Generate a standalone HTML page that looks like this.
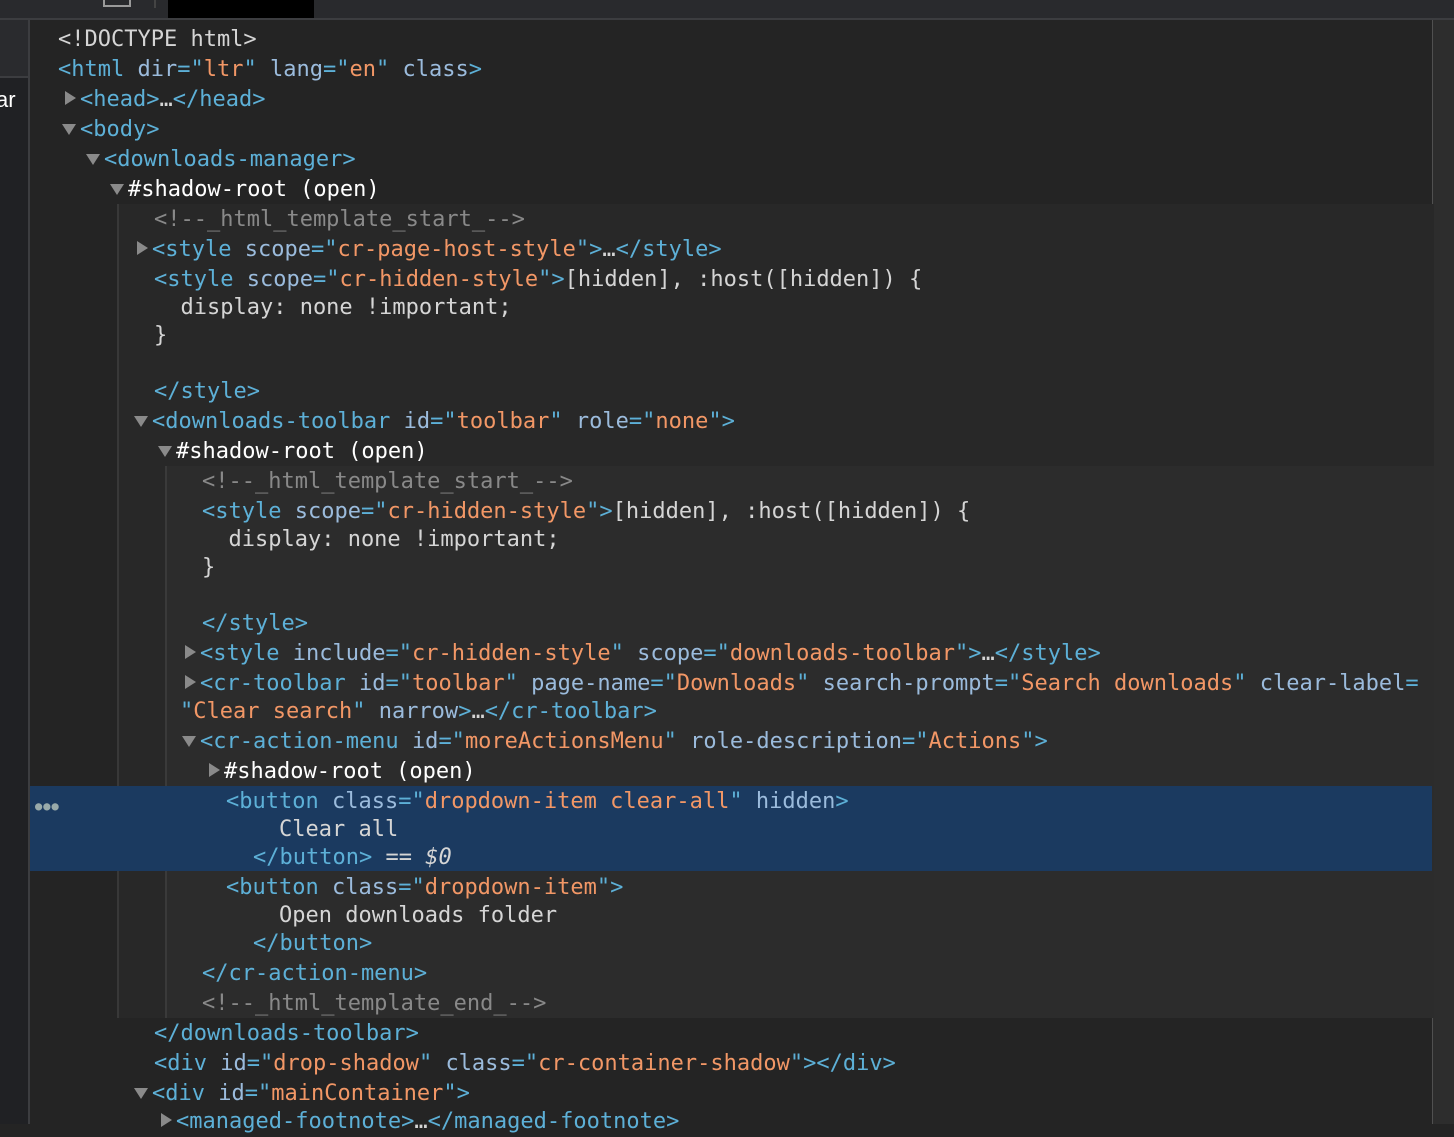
<!DOCTYPE html>
<html><head><style>
body{margin:0;width:1454px;height:1124px;overflow:hidden;background:#242424;position:relative;font-family:"DejaVu Sans Mono","Liberation Mono",monospace;font-size:22px;}
.a{position:absolute;}
.l{position:absolute;height:30px;line-height:30px;white-space:pre;color:#d5d5d5;margin-top:2px;}
.t{color:#5db0d7}.n{color:#9bbbdc}.v{color:#f29766}.c{color:#898989}.w{color:#fff}
.ar{position:absolute;width:0;height:0;}
.r{border-top:7px solid transparent;border-bottom:7px solid transparent;border-left:11px solid #8a8a8a;margin-top:-1px;}
.d{border-left:7px solid transparent;border-right:7px solid transparent;border-top:11px solid #8a8a8a;margin-left:-1px;}
</style></head><body>
<div class="a" style="left:0;top:0;width:1454px;height:18px;background:#292a2d"></div>
<div class="a" style="left:0;top:18px;width:1454px;height:2px;background:#3c3d40"></div>
<div class="a" style="left:168px;top:0;width:146px;height:18px;background:#000"></div>
<div class="a" style="left:103px;top:0;width:28px;height:7px;border:2px solid #9a9a9a;border-top:none;box-sizing:border-box"></div>
<div class="a" style="left:154px;top:0;width:2px;height:8px;background:#444"></div>
<div class="a" style="left:0;top:20px;width:28px;height:1104px;background:#202124"></div>
<div class="a" style="left:0;top:20px;width:28px;height:56px;background:#2a2b2e"></div>
<div class="a" style="left:0;top:76px;width:28px;height:2px;background:#3c3d40"></div>
<div class="a" style="left:28px;top:20px;width:2px;height:1104px;background:#3c3d40"></div>
<div class="l" style="left:-4px;top:83px;color:#fff;font-family:'Liberation Sans',sans-serif">ar</div>
<div class="a" style="left:1432px;top:20px;width:22px;height:1104px;background:#2d2d2d;border-left:1px solid #505050"></div>
<div class="a" style="left:117px;top:204px;width:1315px;height:814px;background:#282828;border-left:2px solid #383838"></div>
<div class="a" style="left:165px;top:466px;width:1267px;height:552px;background:#2c2c2c;border-left:2px solid #3a3a3a"></div>
<div class="a" style="left:30px;top:786px;width:1402px;height:85px;background:#1b3a60"></div>
<div class="a" style="left:35px;top:799px;color:#9aa;font-size:12px;letter-spacing:1px">●●●</div>

<div class="l" style="left:58px;top:23px">&lt;!DOCTYPE html&gt;</div>
<div class="l" style="left:58px;top:53px"><span class="t">&lt;html</span> <span class="n">dir</span><span class="t">="</span><span class="v">ltr</span><span class="t">"</span> <span class="n">lang</span><span class="t">="</span><span class="v">en</span><span class="t">"</span> <span class="n">class</span><span class="t">&gt;</span></div>
<div class="ar r" style="left:65px;top:92px"></div>
<div class="l" style="left:80px;top:83px"><span class="t">&lt;head&gt;</span>…<span class="t">&lt;/head&gt;</span></div>
<div class="ar d" style="left:63px;top:124px"></div>
<div class="l" style="left:80px;top:113px"><span class="t">&lt;body&gt;</span></div>
<div class="ar d" style="left:87px;top:154px"></div>
<div class="l" style="left:104px;top:143px"><span class="t">&lt;downloads-manager&gt;</span></div>
<div class="ar d" style="left:111px;top:184px"></div>
<div class="l w" style="left:128px;top:173px">#shadow-root (open)</div>
<div class="l c" style="left:154px;top:203px">&lt;!--_html_template_start_--&gt;</div>
<div class="ar r" style="left:137px;top:242px"></div>
<div class="l" style="left:152px;top:233px"><span class="t">&lt;style</span> <span class="n">scope</span><span class="t">="</span><span class="v">cr-page-host-style</span><span class="t">"&gt;</span>…<span class="t">&lt;/style&gt;</span></div>
<div class="l" style="left:154px;top:263px"><span class="t">&lt;style</span> <span class="n">scope</span><span class="t">="</span><span class="v">cr-hidden-style</span><span class="t">"&gt;</span>[hidden], :host([hidden]) {</div>
<div class="l" style="left:154px;top:291px">  display: none !important;</div>
<div class="l" style="left:154px;top:319px">}</div>
<div class="l" style="left:154px;top:375px"><span class="t">&lt;/style&gt;</span></div>
<div class="ar d" style="left:135px;top:416px"></div>
<div class="l" style="left:152px;top:405px"><span class="t">&lt;downloads-toolbar</span> <span class="n">id</span><span class="t">="</span><span class="v">toolbar</span><span class="t">"</span> <span class="n">role</span><span class="t">="</span><span class="v">none</span><span class="t">"&gt;</span></div>
<div class="ar d" style="left:159px;top:446px"></div>
<div class="l w" style="left:176px;top:435px">#shadow-root (open)</div>
<div class="l c" style="left:202px;top:465px">&lt;!--_html_template_start_--&gt;</div>
<div class="l" style="left:202px;top:495px"><span class="t">&lt;style</span> <span class="n">scope</span><span class="t">="</span><span class="v">cr-hidden-style</span><span class="t">"&gt;</span>[hidden], :host([hidden]) {</div>
<div class="l" style="left:202px;top:523px">  display: none !important;</div>
<div class="l" style="left:202px;top:551px">}</div>
<div class="l" style="left:202px;top:607px"><span class="t">&lt;/style&gt;</span></div>
<div class="ar r" style="left:185px;top:646px"></div>
<div class="l" style="left:200px;top:637px"><span class="t">&lt;style</span> <span class="n">include</span><span class="t">="</span><span class="v">cr-hidden-style</span><span class="t">"</span> <span class="n">scope</span><span class="t">="</span><span class="v">downloads-toolbar</span><span class="t">"&gt;</span>…<span class="t">&lt;/style&gt;</span></div>
<div class="ar r" style="left:185px;top:676px"></div>
<div class="l" style="left:200px;top:667px"><span class="t">&lt;cr-toolbar</span> <span class="n">id</span><span class="t">="</span><span class="v">toolbar</span><span class="t">"</span> <span class="n">page-name</span><span class="t">="</span><span class="v">Downloads</span><span class="t">"</span> <span class="n">search-prompt</span><span class="t">="</span><span class="v">Search downloads</span><span class="t">"</span> <span class="n">clear-label</span><span class="t">=</span></div>
<div class="l" style="left:180px;top:695px"><span class="t">"</span><span class="v">Clear search</span><span class="t">"</span> <span class="n">narrow</span><span class="t">&gt;</span>…<span class="t">&lt;/cr-toolbar&gt;</span></div>
<div class="ar d" style="left:183px;top:736px"></div>
<div class="l" style="left:200px;top:725px"><span class="t">&lt;cr-action-menu</span> <span class="n">id</span><span class="t">="</span><span class="v">moreActionsMenu</span><span class="t">"</span> <span class="n">role-description</span><span class="t">="</span><span class="v">Actions</span><span class="t">"&gt;</span></div>
<div class="ar r" style="left:209px;top:764px"></div>
<div class="l w" style="left:224px;top:755px">#shadow-root (open)</div>
<div class="l" style="left:226px;top:785px"><span class="t">&lt;button</span> <span class="n">class</span><span class="t">="</span><span class="v">dropdown-item clear-all</span><span class="t">"</span> <span class="n">hidden</span><span class="t">&gt;</span></div>
<div class="l" style="left:279px;top:813px">Clear all</div>
<div class="l" style="left:253px;top:841px"><span class="t">&lt;/button&gt;</span> == <i>$0</i></div>
<div class="l" style="left:226px;top:871px"><span class="t">&lt;button</span> <span class="n">class</span><span class="t">="</span><span class="v">dropdown-item</span><span class="t">"&gt;</span></div>
<div class="l" style="left:279px;top:899px">Open downloads folder</div>
<div class="l" style="left:253px;top:927px"><span class="t">&lt;/button&gt;</span></div>
<div class="l" style="left:202px;top:957px"><span class="t">&lt;/cr-action-menu&gt;</span></div>
<div class="l c" style="left:202px;top:987px">&lt;!--_html_template_end_--&gt;</div>
<div class="l" style="left:154px;top:1017px"><span class="t">&lt;/downloads-toolbar&gt;</span></div>
<div class="l" style="left:154px;top:1047px"><span class="t">&lt;div</span> <span class="n">id</span><span class="t">="</span><span class="v">drop-shadow</span><span class="t">"</span> <span class="n">class</span><span class="t">="</span><span class="v">cr-container-shadow</span><span class="t">"&gt;&lt;/div&gt;</span></div>
<div class="ar d" style="left:135px;top:1088px"></div>
<div class="l" style="left:152px;top:1077px"><span class="t">&lt;div</span> <span class="n">id</span><span class="t">="</span><span class="v">mainContainer</span><span class="t">"&gt;</span></div>
<div class="ar r" style="left:161px;top:1114px"></div>
<div class="l" style="left:176px;top:1105px"><span class="t">&lt;managed-footnote&gt;</span>…<span class="t">&lt;/managed-footnote&gt;</span></div>
</body></html>
